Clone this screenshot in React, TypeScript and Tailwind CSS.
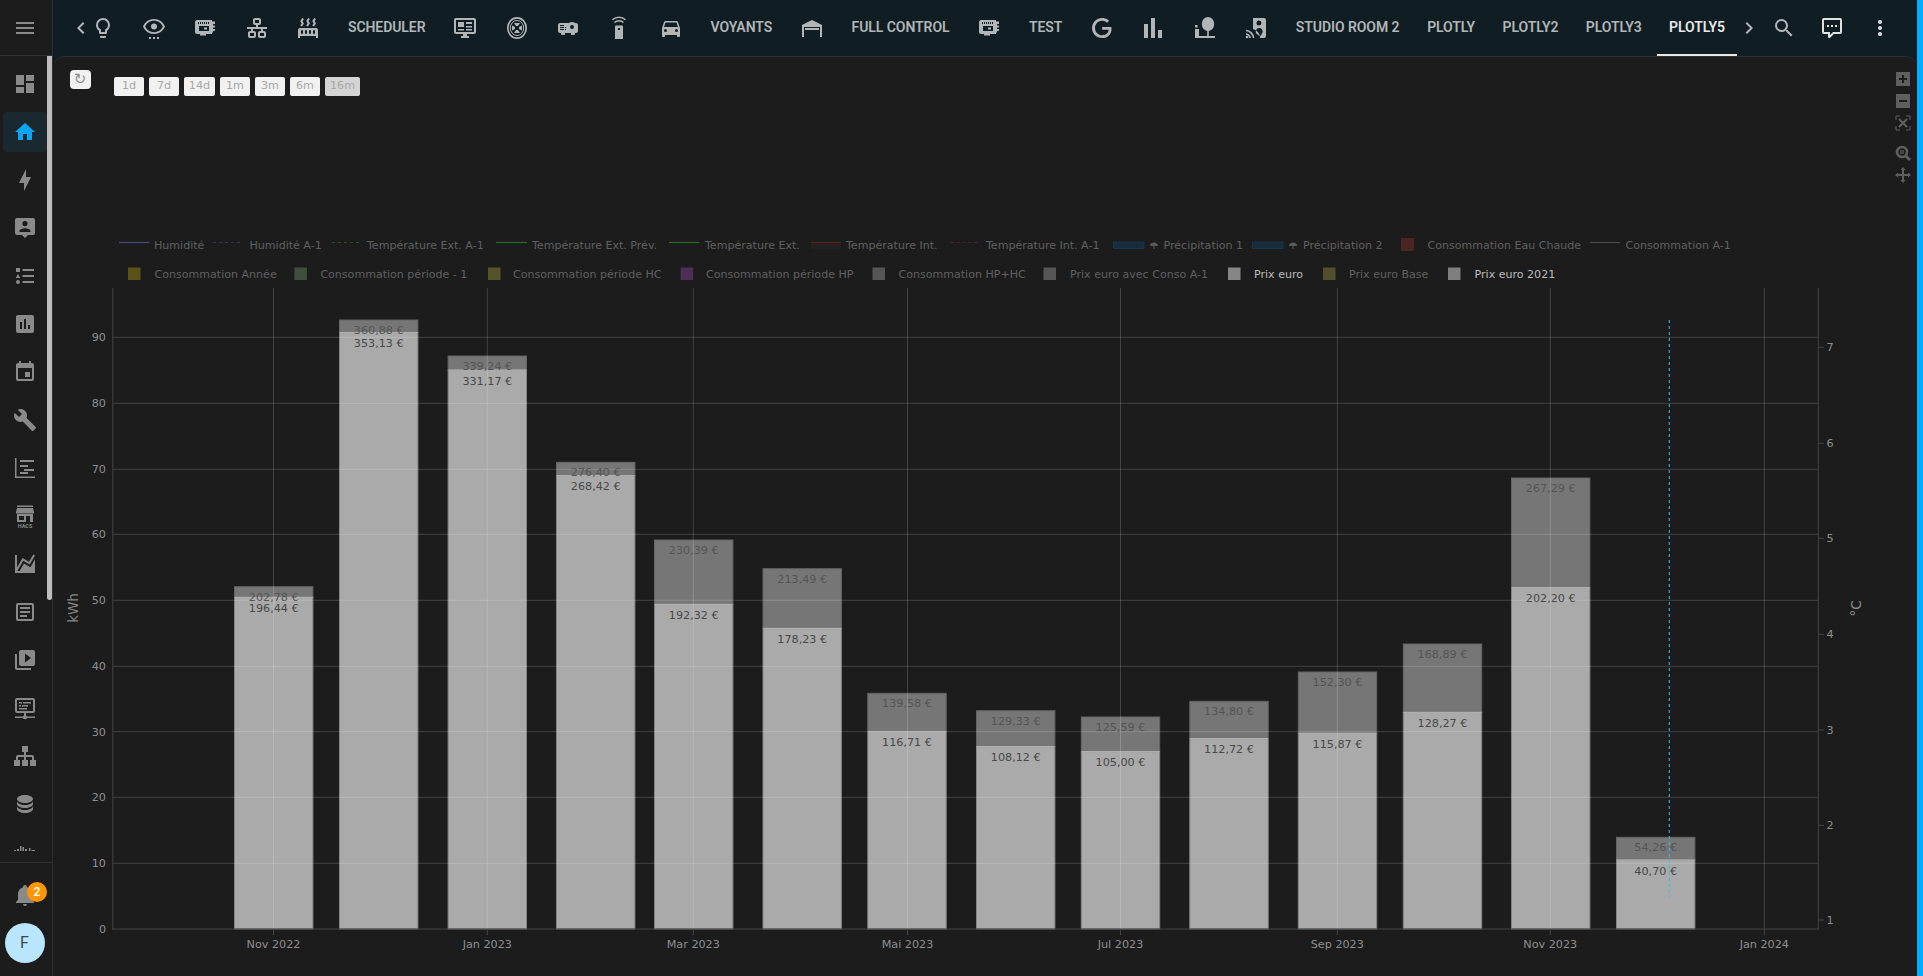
import type { ReactNode } from 'react'

function Icon({ d, children, className = 'h-6 w-6' }: { d?: string; children?: ReactNode; className?: string }) {
  return (
    <svg viewBox="0 0 24 24" fill="currentColor" className={className}>
      {d && <path d={d} fillRule="evenodd" />}
      {children}
    </svg>
  )
}

const boardIcon = (
  <Icon>
    <path
      fillRule="evenodd"
      d="M2 6a2 2 0 0 1 2-2h15v1.500h3v2.500h-2v1.500h2v2h-2v1.500h2v2h-2v1.500h-1V18h-6v1.500H7V18H4a2 2 0 0 1-2-2zM5 6v2h1V6zm2 0v2h1V6zm2 0v2h1V6zm2 0v2h1V6zm2 0v2h1V6zm2 0v2h1V6zM6 10v5h10v-5zm5 1.500h3v2h-3z"
    />
  </Icon>
)

type Tab = { icon?: ReactNode; label?: string; active?: boolean; tight?: boolean }

const tabs: Tab[] = [
  { icon: <Icon d="M12,2A7,7 0 0,1 19,9C19,11.38 17.81,13.47 16,14.74V17A1,1 0 0,1 15,18H9A1,1 0 0,1 8,17V14.74C6.19,13.47 5,11.38 5,9A7,7 0 0,1 12,2M9,21V20H15V21A1,1 0 0,1 14,22H10A1,1 0 0,1 9,21M12,4A5,5 0 0,0 7,9C7,11.05 8.23,12.81 10,13.58V16H14V13.58C15.77,12.81 17,11.05 17,9A5,5 0 0,0 12,4Z" /> },
  { icon: <Icon d="M12 3C7 3 2.7 6.1 1 10.5 2.7 14.9 7 18 12 18s9.3-3.1 11-7.5C21.300 6.100 17 3 12 3zm0 13.200c-3.800 0-7.200-2.100-8.800-5.700C4.800 6.900 8.200 4.800 12 4.800s7.200 2.100 8.800 5.700c-1.600 3.600-5 5.700-8.800 5.700zM12 7.500a3 3 0 1 0 0 6 3 3 0 0 0 0-6zM7 21h2v2H7zM11 21h2v2h-2zM15 21h2v2h-2z" /> },
  { icon: boardIcon },
  { icon: <Icon d="M10,2C8.89,2 8,2.89 8,4V7C8,8.11 8.89,9 10,9H11V11H2V13H6V15H5C3.89,15 3,15.89 3,17V20C3,21.11 3.89,22 5,22H9C10.11,22 11,21.11 11,20V17C11,15.89 10.11,15 9,15H8V13H16V15H15C13.89,15 13,15.89 13,17V20C13,21.11 13.89,22 15,22H19C20.11,22 21,21.11 21,20V17C21,15.89 20.11,15 19,15H18V13H22V11H13V9H14C15.11,9 16,8.11 16,7V4C16,2.89 15.11,2 14,2H10M10,4H14V7H10V4M5,17H9V20H5V17M15,17H19V20H15V17Z" /> },
  { icon: <Icon d="M7.950,3L6.530,5.190L7.950,7.400L5.950,10.500L4.220,9.600L5.640,7.390L4.220,5.190L6.220,2.090L7.950,3M13.950,2.890L12.530,5.100L13.950,7.300L11.950,10.400L10.220,9.500L11.640,7.300L10.220,5.100L12.220,2L13.950,2.890M20,2.890L18.560,5.100L20,7.300L18,10.400L16.250,9.500L17.670,7.300L16.250,5.100L18.250,2L20,2.890M2,22V14A2,2 0 0,1 4,12H20A2,2 0 0,1 22,14V22H20V20H4V22H2M6,14A1,1 0 0,0 5,15V17A1,1 0 0,0 6,18A1,1 0 0,0 7,17V15A1,1 0 0,0 6,14M10,14A1,1 0 0,0 9,15V17A1,1 0 0,0 10,18A1,1 0 0,0 11,17V15A1,1 0 0,0 10,14M14,14A1,1 0 0,0 13,15V17A1,1 0 0,0 14,18A1,1 0 0,0 15,17V15A1,1 0 0,0 14,14M18,14A1,1 0 0,0 17,15V17A1,1 0 0,0 18,18A1,1 0 0,0 19,17V15A1,1 0 0,0 18,14Z" /> },
  { label: 'Scheduler' },
  { icon: <Icon d="M21,16V4H3V16H21M21,2A2,2 0 0,1 23,4V16A2,2 0 0,1 21,18H14V20H16V22H8V20H10V18H3C1.89,18 1,17.1 1,16V4C1,2.89 1.89,2 3,2H21M5,6H11V11H5V6M13,6H19V8H13V6M13,10H19V11.500H13V10M5,13H11V14.500H5V13M13,13H19V14.500H13V13Z" /> },
  {
    icon: (
      <Icon>
        <ellipse cx="12" cy="12" rx="9.200" ry="10.200" fill="none" stroke="currentColor" strokeWidth="1.700" />
        <ellipse cx="12" cy="12" rx="6.700" ry="7.500" fill="none" stroke="currentColor" strokeWidth="1" />
        <path d="M9 7l2 3h2l2-3zM9 17l2-3h2l2 3zM7 9.500l3 1.500v2l-3 1.500zM17 9.500l-3 1.500v2l3 1.500z" />
      </Icon>
    ),
  },
  { icon: <Icon d="M16 6C14.870 6 13.770 6.350 12.840 7H4C2.890 7 2 7.890 2 9V15C2 16.110 2.890 17 4 17H5V18C5 18.550 5.450 19 6 19H8C8.550 19 9 18.550 9 18V17H15V18C15 18.550 15.450 19 16 19H18C18.550 19 19 18.550 19 18V17H20C21.110 17 22 16.110 22 15V9C22 7.890 21.110 7 20 7H19.150C18.230 6.350 17.130 6 16 6M16 9A2 2 0 1 0 16 13A2 2 0 1 0 16 9M4 9H8V10H4V9M4 11H8V12H4V11M9 11H10V12H9V11M4 13H8V14H4V13M9 13H10V14H9V13Z" /> },
  {
    icon: (
      <Icon>
        <path fillRule="evenodd" d="M9 9.500h6a1 1 0 0 1 1 1V23H8V10.500a1 1 0 0 1 1-1zM11 12v2h2v-2z" />
        <path d="M7.500 6.500a6.500 6.500 0 0 1 9 0M5.500 3.800a9.500 9.500 0 0 1 13 0" fill="none" stroke="currentColor" strokeWidth="1.500" />
      </Icon>
    ),
  },
  { icon: <Icon d="M5,11L6.500,6.500H17.500L19,11H5M17.500,16A1.500,1.500 0 1,1 17.500,13A1.500,1.500 0 1,1 17.500,16M6.500,16A1.500,1.500 0 1,1 6.500,13A1.500,1.500 0 1,1 6.500,16M18.920,6C18.720,5.420 18.160,5 17.500,5H6.500C5.840,5 5.280,5.420 5.080,6L3,12V20A1,1 0 0,0 4,21H5A1,1 0 0,0 6,20V19H18V20A1,1 0 0,0 19,21H20A1,1 0 0,0 21,20V12L18.920,6Z" /> },
  { label: 'Voyants' },
  { icon: <Icon d="M22 9V21H20V11H4V21H2V9L12 4L22 9M19 12H5V14H19V12Z" /> },
  { label: 'Full Control' },
  { icon: boardIcon },
  { label: 'Test' },
  { icon: <Icon d="M21.350,11.100H12.180V13.830H18.690C18.360,17.640 15.190,19.270 12.190,19.270C8.360,19.270 5,16.250 5,12C5,7.900 8.200,4.730 12.200,4.730C15.290,4.730 17.100,6.700 17.100,6.700L19,4.720C19,4.720 16.560,2 12.100,2C6.420,2 2.030,6.800 2.030,12C2.030,17.050 6.160,22 12.250,22C17.600,22 21.500,18.330 21.500,12.910C21.500,11.760 21.350,11.100 21.350,11.100Z" /> },
  { icon: <Icon d="M3,22V8H7V22H3M10,22V2H14V22H10M17,22V14H21V22H17Z" /> },
  {
    icon: (
      <Icon>
        <ellipse cx="15" cy="8" rx="6.200" ry="7" />
        <path d="M14.200 14h1.600v6h-1.600zM6 20h16v2H6zM2 9h2.500v2.500H2zM2 13h4v9H2z" />
      </Icon>
    ),
  },
  {
    icon: (
      <Icon>
        <path fillRule="evenodd" d="M9 2h11a2 2 0 0 1 2 2v16a2 2 0 0 1-2 2h-4a9 9 0 0 0-7-9zM15 4.500a2.500 2.500 0 1 0 0 5 2.500 2.500 0 0 0 0-5zM15.500 12a3.500 3.500 0 0 0-2 6.500l2.500 2 2-3a3.500 3.500 0 0 0-2.500-5.500z" />
        <path d="M2 14.500a8 8 0 0 1 7.500 7.500M2 18a4.500 4.500 0 0 1 4 4" fill="none" stroke="currentColor" strokeWidth="1.700" />
        <circle cx="3" cy="21" r="1.300" />
      </Icon>
    ),
  },
  { label: 'Studio Room 2' },
  { label: 'Plotly', tight: true },
  { label: 'Plotly2', tight: true },
  { label: 'Plotly3', tight: true },
  { label: 'Plotly5', active: true, tight: true },
]

const navIcons: ReactNode[] = [
  <Icon d="M13,3V9H21V3M13,21H21V11H13M3,21H11V15H3M3,13H11V3H3V13Z" />,
  <Icon d="M10,20V14H14V20H19V12H22L12,3L2,12H5V20H10Z" />,
  <Icon d="M11 15H6L13 1V9H18L11 23V15Z" />,
  <Icon d="M4 2h16a2 2 0 0 1 2 2v13a2 2 0 0 1-2 2h-5l-3 3-3-3H4a2 2 0 0 1-2-2V4a2 2 0 0 1 2-2zM12 5a2.600 2.600 0 1 0 0 5.200A2.600 2.600 0 0 0 12 5zM6.500 16h11v-1c0-1.800-3.700-2.800-5.500-2.800s-5.500 1-5.500 2.800z" />,
  <Icon d="M3 4h4v4H3zM9.500 5H21v2H9.500zM5 10l2.300 4H2.700zM9.500 11H21v2H9.500zM5 16a2 2 0 1 1 0 4 2 2 0 0 1 0-4zM9.500 17H21v2H9.500z" />,
  <Icon d="M19 3H5C3.900 3 3 3.900 3 5V19C3 20.100 3.900 21 5 21H19C20.100 21 21 20.100 21 19V5C21 3.900 20.100 3 19 3M9 17H7V10H9V17M13 17H11V7H13V17M17 17H15V13H17V17Z" />,
  <Icon d="M19,19H5V8H19V19M16,1V3H8V1H6V3H5C3.890,3 3,3.890 3,5V19A2,2 0 0,0 5,21H19A2,2 0 0,0 21,19V5C21,3.890 20.100,3 19,3H18V1H16M17,12H12V17H17V12Z" />,
  <Icon d="M22.700,19L13.600,9.900C14.500,7.600 14,4.900 12.100,3C10.100,1 7.100,0.600 4.700,1.700L9,6L6,9L1.600,4.700C0.400,7.100 0.900,10.100 2.900,12.100C4.800,14 7.500,14.500 9.800,13.600L18.900,22.700C19.300,23.100 19.900,23.100 20.300,22.700L22.600,20.400C23.100,20 23.100,19.300 22.700,19Z" />,
  <Icon d="M2,2H3.500V20.500H22V22H2V2M7,4H21V6H7V4M7,9H15V11H7V9M11,13H21V15H11V13M7,16H15V18H7V16Z" />,
  <Icon>
    <path d="M4 1.500h16V3H4zM4 4h16l1 4v1.500H3V8z" />
    <path fillRule="evenodd" d="M4 10h16v8h-3v-6h-4v6H4zM6 12v4h5v-4z" />
    <text x="12" y="24" textAnchor="middle" fontSize="5.500" fontWeight="700" fontFamily="Roboto, sans-serif">
      HACS
    </text>
  </Icon>,
  <Icon d="M17.450,15.180L22,7.310V21H2V3H4V15.540L9.500,6L16,9.780L20.240,2.450L21.970,3.450L16.740,12.500L10.230,8.750L4.310,19H6.570L10.960,11.440L17.450,15.180Z" />,
  <Icon d="M5,3C3.890,3 3,3.890 3,5V19C3,20.110 3.890,21 5,21H19C20.110,21 21,20.110 21,19V5C21,3.890 20.110,3 19,3H5M5,5H19V19H5V5M7,7V9H17V7H7M7,11V13H17V11H7M7,15V17H14V15H7Z" />,
  <Icon d="M4 6H2v14c0 1.100.9 2 2 2h14v-2H4V6zm16-4H8c-1.100 0-2 .9-2 2v12c0 1.100.9 2 2 2h12c1.100 0 2-.9 2-2V4c0-1.100-.9-2-2-2zm-8 12.500v-9l6 4.500-6 4.500z" />,
  <Icon d="M4 2h16a2 2 0 0 1 2 2v11a2 2 0 0 1-2 2h-7v2.500a2.500 2.500 0 0 1 1.200 1H22V22h-7.800a2.500 2.500 0 0 1-4.400 0H2v-1.500h7.800a2.500 2.500 0 0 1 1.200-1V17H4a2 2 0 0 1-2-2V4a2 2 0 0 1 2-2zM4 4v11h16V4zM6 6h3v1.500H6zM10 6h8v1.500h-8zM6 9h2v1.500H6zM9 9h6v1.500H9zM6 12h8v1.500H6z" />,
  <Icon d="M9,2V8H11V11H5C3.890,11 3,11.890 3,13V16H1V22H7V16H5V13H11V16H9V22H15V16H13V13H19V16H17V22H23V16H21V13C21,11.890 20.110,11 19,11H13V8H15V2H9Z" />,
  <Icon d="M12,3C7.580,3 4,4.790 4,7C4,9.210 7.580,11 12,11C16.420,11 20,9.210 20,7C20,4.790 16.420,3 12,3M4,9V12C4,14.210 7.580,16 12,16C16.420,16 20,14.210 20,12V9C20,11.210 16.420,13 12,13C7.580,13 4,11.210 4,9M4,14V17C4,19.210 7.580,21 12,21C16.420,21 20,19.210 20,17V14C20,16.210 16.420,18 12,18C7.580,18 4,16.210 4,14Z" />,
  <Icon d="M1 10h2v2H1zM4 9h2v3H4zM7 6h1.500v6H7zM9.500 7H11v5H9.500zM12 9h2v3h-2zM16 8h1.500v4H16zM18.500 10H22v2h-3.500z" />,
]

const ranges = ['1d', '7d', '14d', '1m', '3m', '6m', '16m']

const bars = [
  { cx: 273.7, dark: 586.7, light: 597.3, darkLabel: '202,78 €', lightLabel: '196,44 €' },
  { cx: 378.7, dark: 320, light: 332.7, darkLabel: '360,88 €', lightLabel: '353,13 €' },
  { cx: 487.3, dark: 356, light: 370, darkLabel: '339,24 €', lightLabel: '331,17 €' },
  { cx: 595.7, dark: 462.3, light: 475.7, darkLabel: '276,40 €', lightLabel: '268,42 €' },
  { cx: 693.7, dark: 540, light: 604.3, darkLabel: '230,39 €', lightLabel: '192,32 €' },
  { cx: 802.2, dark: 568.7, light: 628.3, darkLabel: '213,49 €', lightLabel: '178,23 €' },
  { cx: 907, dark: 693.3, light: 731.7, darkLabel: '139,58 €', lightLabel: '116,71 €' },
  { cx: 1015.7, dark: 710.7, light: 746.7, darkLabel: '129,33 €', lightLabel: '108,12 €' },
  { cx: 1120.5, dark: 717, light: 751.7, darkLabel: '125,59 €', lightLabel: '105,00 €' },
  { cx: 1229, dark: 701.3, light: 738.7, darkLabel: '134,80 €', lightLabel: '112,72 €' },
  { cx: 1337.5, dark: 672, light: 733.3, darkLabel: '152,30 €', lightLabel: '115,87 €' },
  { cx: 1442.5, dark: 644, light: 712.3, darkLabel: '168,89 €', lightLabel: '128,27 €' },
  { cx: 1550.7, dark: 478, light: 587.7, darkLabel: '267,29 €', lightLabel: '202,20 €' },
  { cx: 1655.7, dark: 837.3, light: 860, darkLabel: '54,26 €', lightLabel: '40,70 €' },
]

const hGrid = [
  { y: 929, label: '0' },
  { y: 863.3, label: '10' },
  { y: 797.3, label: '20' },
  { y: 731.7, label: '30' },
  { y: 666.3, label: '40' },
  { y: 600.3, label: '50' },
  { y: 534.3, label: '60' },
  { y: 469.3, label: '70' },
  { y: 403.3, label: '80' },
  { y: 337.3, label: '90' },
]

const vGrid = [
  { x: 273.5, label: 'Nov 2022' },
  { x: 487.3, label: 'Jan 2023' },
  { x: 693.3, label: 'Mar 2023' },
  { x: 907.5, label: 'Mai 2023' },
  { x: 1120.5, label: 'Jul 2023' },
  { x: 1337.3, label: 'Sep 2023' },
  { x: 1550.3, label: 'Nov 2023' },
  { x: 1764.3, label: 'Jan 2024' },
]

const rightTicks = [
  { y: 920, label: '1' },
  { y: 825.3, label: '2' },
  { y: 730, label: '3' },
  { y: 634.3, label: '4' },
  { y: 538.3, label: '5' },
  { y: 443.3, label: '6' },
  { y: 347.3, label: '7' },
]

// first legend row: swatch start/end, stroke, dash, text start
const lineLegend = [
  { x1: 119, x2: 149.5, color: '#4a4a78', dash: '', tx: 154, label: 'Humidité' },
  { x1: 213, x2: 241, color: '#33334f', dash: '3 3', tx: 249.5, label: 'Humidité A-1' },
  { x1: 332, x2: 360, color: '#2a4a2a', dash: '3 3', tx: 367, label: 'Température Ext. A-1' },
  { x1: 496, x2: 527, color: '#2a6a2a', dash: '', tx: 532, label: 'Température Ext. Prév.' },
  { x1: 669, x2: 699.5, color: '#2a6a2a', dash: '', tx: 705, label: 'Température Ext.' },
  { x1: 811, x2: 841, color: '#5a2020', dash: '', tx: 846, label: 'Température Int.' },
  { x1: 950.5, x2: 977.5, color: '#472525', dash: '3 3', tx: 986, label: 'Température Int. A-1' },
  { x1: 1590, x2: 1620, color: '#4a4a4a', dash: '', tx: 1625.6, label: 'Consommation A-1' },
]

const squareLegend = [
  { x: 128, color: '#5a5216', tx: 154.6, label: 'Consommation Année' },
  { x: 294.4, color: '#3f4f3f', tx: 320.4, label: 'Consommation période - 1' },
  { x: 488, color: '#54542b', tx: 513, label: 'Consommation période HC' },
  { x: 680.6, color: '#4e2e55', tx: 706, label: 'Consommation période HP' },
  { x: 872.5, color: '#565656', tx: 898.5, label: 'Consommation HP+HC' },
  { x: 1043.5, color: '#565656', tx: 1070, label: 'Prix euro avec Conso A-1' },
  { x: 1228, color: '#868686', tx: 1254, label: 'Prix euro', on: true },
  { x: 1323, color: '#50502c', tx: 1349, label: 'Prix euro Base' },
  { x: 1448, color: '#7f7f7f', tx: 1474.6, label: 'Prix euro 2021', on: true },
]

function Chart() {
  const dim = '#606060'
  return (
    <svg viewBox="53 230 1864 746" className="block h-[746px] w-[1864px] font-['DejaVu_Sans',sans-serif] text-[11.2px]">
      {/* legend */}
      <g className="text-[11.05px]">
        {lineLegend.map((l) => (
          <g key={l.label}>
            <line x1={l.x1} x2={l.x2} y1={242.5} y2={242.5} stroke={l.color} strokeWidth={1.2} strokeDasharray={l.dash} />
            <text x={l.tx} y={249} fill={dim}>
              {l.label}
            </text>
          </g>
        ))}
        <rect x={811} y={243.5} width={30} height={6} fill="#212121" />
        {[
          { x: 1113.5, gx: 1154, tx: 1163.5, label: 'Précipitation 1' },
          { x: 1252.5, gx: 1293, tx: 1303, label: 'Précipitation 2' },
        ].map((p) => (
          <g key={p.label}>
            <rect x={p.x} y={242} width={30.5} height={6.5} fill="#182c3a" stroke="#1c3a50" strokeWidth={0.8} />
            <path d={`M${p.gx - 4} 246a4 3.500 0 0 1 8 0z M${p.gx - 0.5} 246h1v3h-1z`} fill="#5a5a5a" />
            <text x={p.tx} y={249} fill={dim}>
              {p.label}
            </text>
          </g>
        ))}
        <rect x={1401} y={238} width={13} height={13} fill="#4c2424" />
        <text x={1427.5} y={249} fill={dim}>
          Consommation Eau Chaude
        </text>
        {squareLegend.map((s) => (
          <g key={s.label}>
            <rect x={s.x} y={267.5} width={12.5} height={12.5} fill={s.color} />
            <text x={s.tx} y={278} fill={s.on ? '#bdbdbd' : dim}>
              {s.label}
            </text>
          </g>
        ))}
      </g>

      {/* bars */}
      {bars.map((b) => (
        <g key={b.cx}>
          <rect x={b.cx - 39.2} y={b.dark} width={78.4} height={b.light - b.dark} fill="#767676" stroke="#656565" strokeWidth={1} />
          <rect x={b.cx - 39.2} y={b.light} width={78.4} height={929 - b.light} fill="#aaaaaa" stroke="#858585" strokeWidth={1} />
          <line x1={b.cx - 39} x2={b.cx + 39} y1={b.light} y2={b.light} stroke="#bababa" />
        </g>
      ))}

      {/* grid and axes */}
      {hGrid.map((g) => (
        <g key={g.label}>
          {g.y < 929 && <line x1={113} x2={1818} y1={g.y} y2={g.y} stroke="#ffffff" strokeOpacity={0.17} />}
          <text x={106} y={g.y + 4} textAnchor="end" fill="#8f8f8f">
            {g.label}
          </text>
        </g>
      ))}
      {vGrid.map((g) => (
        <g key={g.label}>
          <line x1={g.x} x2={g.x} y1={288} y2={929} stroke="#ffffff" strokeOpacity={0.17} />
          <line x1={g.x} x2={g.x} y1={929} y2={935} stroke="#444444" />
          <text x={g.x} y={948} textAnchor="middle" fill="#8f8f8f">
            {g.label}
          </text>
        </g>
      ))}
      <line x1={112.8} x2={112.8} y1={288} y2={929} stroke="#444444" />
      <line x1={1818.3} x2={1818.3} y1={288} y2={929} stroke="#444444" />
      <line x1={112} x2={1819} y1={929} y2={929} stroke="#444444" strokeWidth={1.2} />
      {rightTicks.map((t) => (
        <g key={t.label}>
          <line x1={1818} x2={1824} y1={t.y} y2={t.y} stroke="#444444" />
          <text x={1826.5} y={t.y + 4} fill="#8f8f8f">
            {t.label}
          </text>
        </g>
      ))}
      <text transform="translate(78 608) rotate(-90)" textAnchor="middle" fill="#858585" className="text-[13.5px]">
        kWh
      </text>
      <text transform="translate(1860.500 608.500) rotate(-90)" textAnchor="middle" fill="#8f8f8f" className="text-[13.5px]">
        °C
      </text>

      {/* value labels */}
      {bars.map((b) => (
        <g key={b.cx} textAnchor="middle">
          <text x={b.cx} y={b.dark + 14} fill="#555555">
            {b.darkLabel}
          </text>
          <text x={b.cx} y={b.light + 14.5} fill="#484848">
            {b.lightLabel}
          </text>
        </g>
      ))}

      {/* now marker */}
      <line x1={1669.3} x2={1669.3} y1={320} y2={897} stroke="#2ec0f5" strokeWidth={1} strokeDasharray="3 3" />
    </svg>
  )
}

function ModeBar() {
  return (
    <div className="absolute right-[7px] top-[15px] flex w-[14px] flex-col text-[#5f5f5f]">
      <svg viewBox="0 0 14 14" fill="currentColor" className="h-[14px] w-[14px]">
        <path fillRule="evenodd" d="M0 0h14v14H0zM6 3v3H3v2h3v3h2V8h3V6H8V3z" />
      </svg>
      <svg viewBox="0 0 14 14" fill="currentColor" className="mt-[8px] h-[14px] w-[14px]">
        <path fillRule="evenodd" d="M0 0h14v14H0zM3 6v2h8V6z" />
      </svg>
      <svg viewBox="0 0 16 16" fill="none" stroke="currentColor" className="-mx-[1px] mt-[7px] h-[16px] w-[16px]">
        <path d="M1 5V1h4M11 1h4v4M15 11v4h-4M5 15H1v-4" />
        <path d="M4 4l8 8M12 4l-8 8" strokeWidth="2" />
      </svg>
      <svg viewBox="0 0 16 16" fill="none" stroke="currentColor" className="-mx-[1px] mt-[14px] h-[16px] w-[16px]">
        <circle cx="7" cy="7" r="5" strokeWidth="2.600" />
        <path d="M11 11l4 4" strokeWidth="3" />
        <rect x="5" y="5" width="4" height="4" fill="currentColor" stroke="none" opacity="0.6" />
      </svg>
      <svg viewBox="0 0 16 16" fill="currentColor" className="-mx-[1px] mt-[6px] h-[16px] w-[16px]">
        <path d="M8 0l2.500 3H9v4h4V5.500L16 8l-3 2.500V9H9v4h1.500L8 16l-2.500-3H7V9H3v1.500L0 8l3-2.500V7h4V3H5.500z" />
      </svg>
    </div>
  )
}

export default function App() {
  return (
    <div className="flex h-[976px] w-[1923px] overflow-hidden bg-[#1c1c1c] font-['Roboto',sans-serif]">
      {/* sidebar */}
      <aside className="relative flex w-[53px] shrink-0 flex-col border-r border-[#2e2e2e] text-[#8a8a8a]">
        <div className="flex h-[56px] shrink-0 items-center border-b border-[#303030] pl-[13px]">
          <Icon d="M3,6H21V8H3V6M3,11H21V13H3V11M3,16H21V18H3V16Z" />
        </div>
        <nav className="h-[795px] shrink-0 overflow-hidden pt-[4px]">
          {navIcons.map((icon, i) => (
            <div key={i} className="flex h-12 items-center">
              <div
                className={`ml-[3px] flex h-10 w-[44px] items-center justify-center rounded ${
                  i === 1 ? 'bg-[#19292f] text-[#0ba6f3]' : ''
                }`}
              >
                {icon}
              </div>
            </div>
          ))}
        </nav>
        <div className="mt-[11px] border-t border-[#2e2e2e] pt-[8px]">
          <div className="relative flex h-12 items-center justify-center pr-[3px]">
            <Icon d="M21,19V20H3V19L5,17V11C5,7.900 7.030,5.170 10,4.290C10,4.190 10,4.100 10,4A2,2 0 0,1 12,2A2,2 0 0,1 14,4C14,4.100 14,4.190 14,4.290C16.970,5.170 19,7.900 19,11V17L21,19M14,21A2,2 0 0,1 12,23A2,2 0 0,1 10,21" />
            <span className="absolute left-[27px] top-[11px] flex h-5 w-5 items-center justify-center rounded-full bg-[#ff9800] text-xs font-medium text-white">
              2
            </span>
          </div>
          <div className="flex h-12 items-center justify-center pr-[3px]">
            <div className="flex h-10 w-10 items-center justify-center rounded-full bg-[#b9e6fc] text-base text-[#3a4a52]">F</div>
          </div>
        </div>
        <div className="absolute left-[47px] top-[56px] h-[544px] w-[5px] rounded-b bg-[#bdbdbd]" />
      </aside>

      <div className="flex min-w-0 flex-1 flex-col bg-[#101e24]">
        {/* toolbar */}
        <header className="flex h-14 shrink-0 items-center text-[#b1b6b8]">
          <div className="-mr-[15.500px] ml-[15.500px] w-6 shrink-0">
            <Icon d="M15.410,16.580L10.830,12L15.410,7.410L14,6L8,12L14,18L15.410,16.580Z" />
          </div>
          <div className="flex min-w-0 flex-1 overflow-hidden">
            {tabs.map((t, i) =>
              t.icon ? (
                <div key={i} className="flex h-14 w-[51.400px] shrink-0 items-center justify-center">
                  {t.icon}
                </div>
              ) : (
                <div
                  key={i}
                  className={`relative flex h-14 shrink-0 items-center whitespace-nowrap pb-[2px] text-sm font-semibold uppercase tracking-[-0.07px] ${
                    t.tight ? 'px-[13.700px]' : 'px-[14px]'
                  } ${t.active ? 'text-[#e8e8e8]' : ''}`}
                >
                  {t.label}
                  {t.active && <span className="absolute inset-x-[2px] bottom-0 h-[2px] bg-[#e8e8e8]" />}
                </div>
              ),
            )}
          </div>
          <div className="-mr-px w-6 shrink-0">
            <Icon d="M8.590,16.580L13.170,12L8.590,7.410L10,6L16,12L10,18L8.590,16.580Z" />
          </div>
          <div className="flex h-12 w-12 shrink-0 items-center justify-center">
            <Icon d="M9.500,3A6.500,6.500 0 0,1 16,9.500C16,11.110 15.410,12.590 14.440,13.730L14.710,14H15.500L20.500,19L19,20.500L14,15.500V14.710L13.730,14.440C12.590,15.410 11.110,16 9.500,16A6.500,6.500 0 0,1 3,9.500A6.500,6.500 0 0,1 9.500,3M9.500,5C7,5 5,7 5,9.500C5,12 7,14 9.500,14C12,14 14,12 14,9.500C14,7 12,5 9.500,5Z" />
          </div>
          <div className="flex h-12 w-12 shrink-0 items-center justify-center text-[#dfe2e3]">
            <Icon d="M9,22A1,1 0 0,1 8,21V18H4A2,2 0 0,1 2,16V4C2,2.890 2.900,2 4,2H20A2,2 0 0,1 22,4V16A2,2 0 0,1 20,18H13.900L10.200,21.710C10,21.900 9.750,22 9.500,22H9M10,16V19.080L13.080,16H20V4H4V16H10M17,11H15V9H17V11M13,11H11V9H13V11M9,11H7V9H9V11Z" />
          </div>
          <div className="mr-[13px] flex h-12 w-12 shrink-0 items-center justify-center text-[#dfe2e3]">
            <Icon d="M12,16A2,2 0 1,1 12,20A2,2 0 1,1 12,16M12,10A2,2 0 1,1 12,14A2,2 0 1,1 12,10M12,4A2,2 0 1,1 12,8A2,2 0 1,1 12,4Z" />
          </div>
        </header>

        <main className="relative min-h-0 flex-1 rounded-t-xl border-t border-[#2e2e2e] bg-[#1c1c1c]">
          <ModeBar />
          {/* range selector */}
          <div className="flex h-[173px] items-start pl-[16.500px] pt-[13px] font-['DejaVu_Sans',sans-serif] text-[11.2px] text-[#a8a8a8]">
            <div className="flex h-[19px] w-[21px] items-center justify-center rounded-[4px] bg-[#f1f1f1] text-[15px] leading-none text-[#8f8f8f]">↻</div>
            <div className="ml-[23.500px] mt-[7px] flex gap-[5px]">
              {ranges.map((r) => (
                <div
                  key={r}
                  className={`flex h-[19px] w-[30px] items-center justify-center rounded-[2px] ${
                    r === '16m' ? 'w-[35px] bg-[#d4d4d4]' : r === '14d' ? 'w-[31px] bg-[#f1f1f1]' : 'bg-[#f1f1f1]'
                  }`}
                >
                  {r}
                </div>
              ))}
            </div>
          </div>
          <Chart />
        </main>
      </div>

      {/* strip of the window behind */}
      <div className="w-[6px] shrink-0 bg-[#00aeff]" />
    </div>
  )
}
